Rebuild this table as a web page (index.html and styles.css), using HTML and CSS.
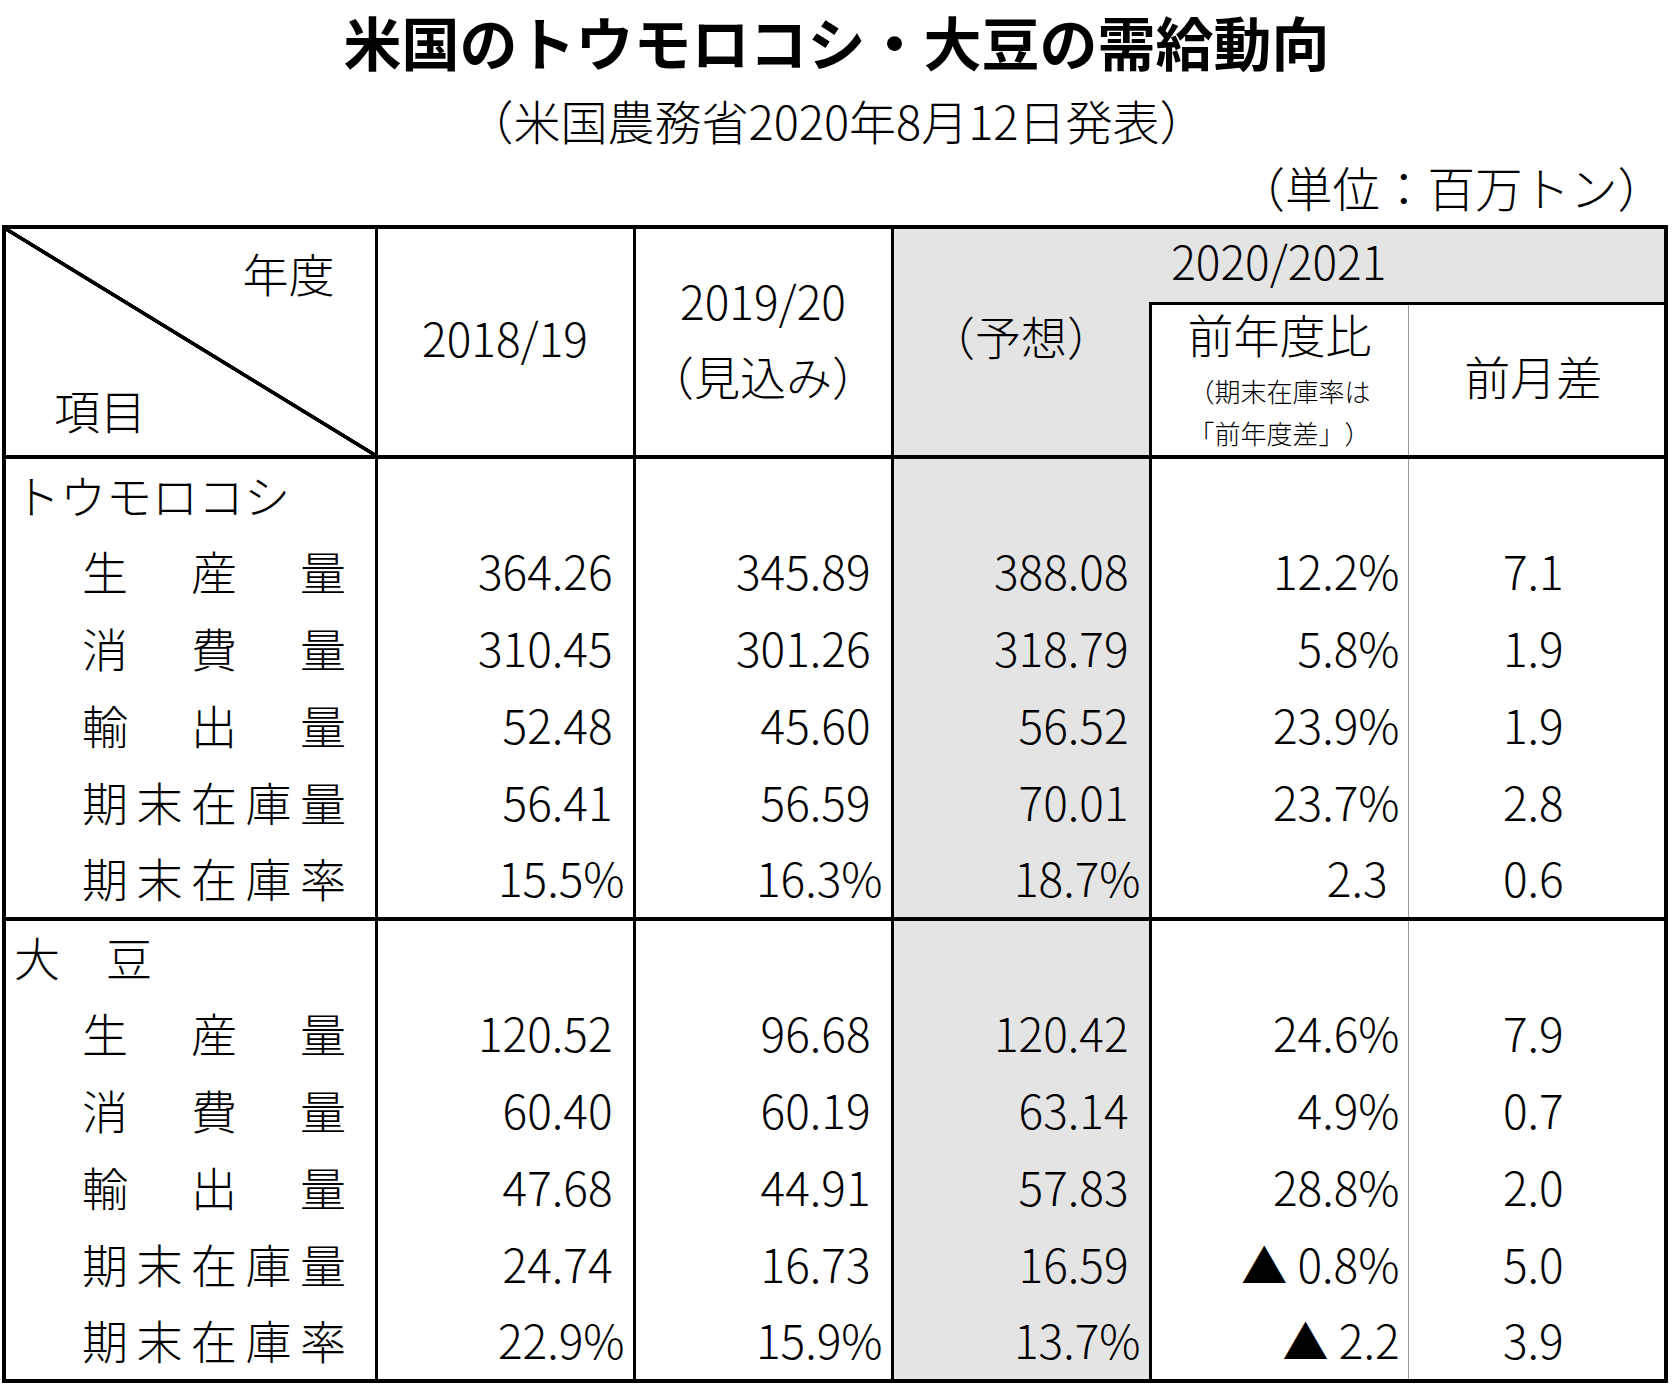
FILE: index.html
```html
<!DOCTYPE html>
<html lang="ja">
<head>
<meta charset="utf-8">
<title>米国のトウモロコシ・大豆の需給動向</title>
<link rel="stylesheet" href="styles.css">
</head>
<body>
<div class="page">
  <h1 class="title">米国のトウモロコシ・大豆の需給動向</h1>
  <p class="subtitle">（米国農務省2020年8月12日発表）</p>
  <p class="unit">（単位：百万トン）</p>
  <table class="supply">
    <colgroup>
      <col class="c-item"><col class="c-val"><col class="c-val"><col class="c-val"><col class="c-val"><col class="c-val">
    </colgroup>
    <thead>
      <tr class="hr1">
        <th rowspan="2" class="diag"><div class="diag-box"><span class="diag-year">年度</span><span class="diag-item">項目</span></div></th>
        <th rowspan="2" class="h-year">2018/19</th>
        <th rowspan="2" class="h-year">2019/20<br>（見込み）</th>
        <th colspan="3" class="h-span fc">2020/2021</th>
      </tr>
      <tr class="hr2">
        <th class="h-forecast fc">（予想）</th>
        <th class="h-yoy c5"><span class="yoy-main">前年度比</span><span class="note">（期末在庫率は<br>「前年度差」）</span></th>
        <th class="h-mom c6">前月差</th>
      </tr>
    </thead>
    <tbody class="sec">
      <tr class="r"><th class="sec-name">トウモロコシ</th><td></td><td></td><td class="fc"></td><td class="c5"></td><td class="c6"></td></tr>
      <tr class="r"><th class="row-label">生　産　量</th><td class="num">364.26</td><td class="num">345.89</td><td class="num fc">388.08</td><td class="num pct c5">12.2%</td><td class="c6">7.1</td></tr>
      <tr class="r"><th class="row-label">消　費　量</th><td class="num">310.45</td><td class="num">301.26</td><td class="num fc">318.79</td><td class="num pct c5">5.8%</td><td class="c6">1.9</td></tr>
      <tr class="r"><th class="row-label">輸　出　量</th><td class="num">52.48</td><td class="num">45.60</td><td class="num fc">56.52</td><td class="num pct c5">23.9%</td><td class="c6">1.9</td></tr>
      <tr class="r"><th class="row-label">期末在庫量</th><td class="num">56.41</td><td class="num">56.59</td><td class="num fc">70.01</td><td class="num pct c5">23.7%</td><td class="c6">2.8</td></tr>
      <tr class="r"><th class="row-label">期末在庫率</th><td class="num pct">15.5%</td><td class="num pct">16.3%</td><td class="num pct fc">18.7%</td><td class="num c5">2.3</td><td class="c6">0.6</td></tr>
    </tbody>
    <tbody class="sec">
      <tr class="r"><th class="sec-name">大　豆</th><td></td><td></td><td class="fc"></td><td class="c5"></td><td class="c6"></td></tr>
      <tr class="r"><th class="row-label">生　産　量</th><td class="num">120.52</td><td class="num">96.68</td><td class="num fc">120.42</td><td class="num pct c5">24.6%</td><td class="c6">7.9</td></tr>
      <tr class="r"><th class="row-label">消　費　量</th><td class="num">60.40</td><td class="num">60.19</td><td class="num fc">63.14</td><td class="num pct c5">4.9%</td><td class="c6">0.7</td></tr>
      <tr class="r"><th class="row-label">輸　出　量</th><td class="num">47.68</td><td class="num">44.91</td><td class="num fc">57.83</td><td class="num pct c5">28.8%</td><td class="c6">2.0</td></tr>
      <tr class="r"><th class="row-label">期末在庫量</th><td class="num">24.74</td><td class="num">16.73</td><td class="num fc">16.59</td><td class="num pct c5">▲ 0.8%</td><td class="c6">5.0</td></tr>
      <tr class="r"><th class="row-label">期末在庫率</th><td class="num pct">22.9%</td><td class="num pct">15.9%</td><td class="num pct fc">13.7%</td><td class="num pct c5">▲ 2.2</td><td class="c6">3.9</td></tr>
    </tbody>
  </table>
</div>
</body>
</html>
```

FILE: styles.css
```css
html, body {
  margin: 0;
  padding: 0;
  background: #fff;
}

body {
  font-family: "Noto Sans CJK JP", "Noto Sans", sans-serif;
  font-weight: 300;
  color: #000;
  font-size: 46px;
  text-spacing-trim: space-all;
}

.page {
  width: 1673px;
}

.title {
  margin: 0;
  font-size: 58px;
  font-weight: 700;
  line-height: 82px;
  text-align: center;
}

.subtitle {
  margin: 10px 0 0;
  font-size: 47px;
  line-height: 56px;
  text-align: center;
}

.unit {
  margin: 14px 0 0;
  font-size: 47.5px;
  line-height: 50px;
  text-align: right;
  padding-right: 8px;
}

.supply {
  margin: 13px 0 0 2px;
  width: 1666px;
  table-layout: fixed;
  border-collapse: collapse;
  border: 4px solid #000;
}

.c-item { width: 372px; }
.c-val { width: 258px; }

.supply th,
.supply td {
  font-weight: 300;
  padding: 0;
  border-left: 3px solid #000;
  border-right: 3px solid #000;
  white-space: nowrap;
  vertical-align: middle;
}

.supply .fc { background: #e4e4e4; }

/* header */
.hr1 { height: 76px; }
.hr2 { height: 154px; }

.supply thead tr:last-child > th,
.supply thead .diag,
.supply thead .h-year {
  border-bottom: 4px solid #000;
}

.supply .diag {
  background: linear-gradient(to top right,
    transparent calc(50% - 2.2px),
    #000 calc(50% - 1.6px),
    #000 calc(50% + 1.6px),
    transparent calc(50% + 2.2px));
}

.diag-box {
  height: 226px;
  display: flex;
  flex-direction: column;
  justify-content: space-between;
  line-height: 56px;
}

.diag-year {
  align-self: flex-end;
  padding: 15px 40px 0 0;
}

.diag-item {
  align-self: flex-start;
  padding: 0 0 18px 48px;
}

.supply .h-year {
  text-align: center;
  line-height: 75px;
  padding-bottom: 9px;
}

.supply .h-span {
  text-align: center;
  line-height: 56px;
  padding-bottom: 10px;
  border-bottom: 3px solid #000;
}

.supply .h-forecast {
  border-top: hidden;
  vertical-align: top;
  text-align: center;
  line-height: 56px;
  padding-top: 4px;
}

.supply .h-yoy {
  vertical-align: top;
  text-align: center;
}

.yoy-main {
  display: block;
  line-height: 56px;
}

.note {
  display: block;
  font-size: 26px;
  line-height: 42px;
  margin-top: 9px;
}

.supply .h-mom {
  text-align: center;
  line-height: 56px;
  padding-bottom: 10px;
}

.supply .c5 { border-right: 1px solid #999; }
.supply .c6 { border-left: 1px solid #999; text-align: center; }

/* body */
.r { height: 77px; }

.supply tbody td,
.supply tbody th {
  line-height: 56px;
  padding-bottom: 6px;
}

.supply .sec + .sec tr:first-child > th,
.supply .sec + .sec tr:first-child > td {
  border-top: 4px solid #000;
}

.supply .sec-name {
  text-align: left;
  padding-left: 8px;
}

.supply .row-label {
  text-align: left;
  padding-left: 76px;
  letter-spacing: 8.5px;
}

.supply .num {
  text-align: right;
  padding-right: 20px;
}

.supply .num.pct {
  padding-right: 8px;
}

.supply .c6 {
  padding-right: 6px;
}
```
